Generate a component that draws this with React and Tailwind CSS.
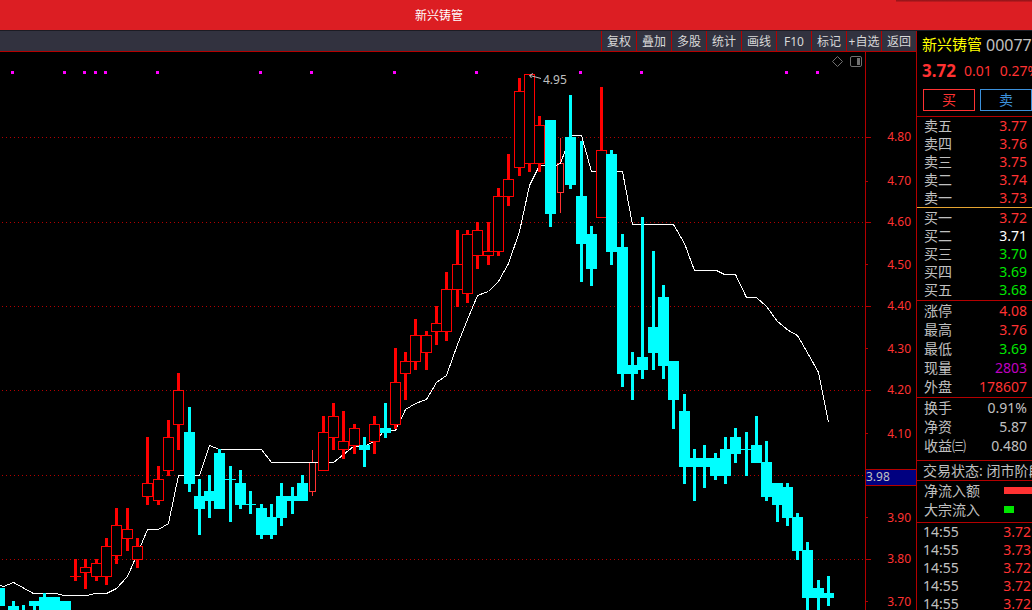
const FONT = "font-['Noto_Sans','Noto_Sans_CJK_SC',sans-serif]";

const TOOLS = ["复权", "叠加", "多股", "统计", "画线", "F10", "标记", "+自选", "返回"];

const CANDLES = [
  ["d", -2, 588, 606, 588, 606],
  ["d", 12, 606, 612, 601, 612],
  ["d", 22, 610, 612, 605, 612],
  ["d", 33, 601, 606, 601, 612],
  ["d", 43, 597, 612, 593, 612],
  ["d", 53, 597, 612, 597, 612],
  ["d", 64, 601, 612, 601, 612],
  ["u", 74, 576, 577, 559, 581],
  ["u", 84, 567, 573, 559, 589],
  ["u", 95, 563, 577, 559, 581],
  ["u", 105, 546, 577, 538, 585],
  ["u", 115, 525, 556, 508, 564],
  ["u", 126, 529, 539, 508, 551],
  ["u", 136, 546, 560, 538, 568],
  ["u", 146, 483, 497, 437, 505],
  ["u", 157, 479, 501, 466, 505],
  ["u", 167, 437, 471, 420, 476],
  ["u", 177, 390, 425, 373, 450],
  ["d", 188, 432, 484, 407, 492],
  ["d", 198, 496, 509, 479, 535],
  ["d", 208, 491, 501, 475, 518],
  ["d", 218, 453, 509, 449, 509],
  ["d", 229, 479, 480, 466, 522],
  ["d", 239, 483, 505, 470, 509],
  ["d", 249, 504, 505, 491, 514],
  ["d", 260, 508, 535, 504, 539],
  ["d", 270, 517, 535, 504, 539],
  ["d", 280, 496, 518, 483, 526],
  ["d", 291, 496, 501, 487, 514],
  ["d", 301, 483, 501, 475, 501],
  ["t", 311, 462, 492, 450, 496],
  ["u", 322, 432, 471, 416, 471],
  ["u", 332, 416, 438, 403, 450],
  ["u", 342, 441, 450, 411, 459],
  ["u", 353, 428, 446, 424, 454],
  ["d", 363, 445, 450, 437, 467],
  ["u", 373, 424, 442, 416, 454],
  ["d", 384, 428, 433, 403, 438],
  ["u", 394, 382, 425, 348, 429],
  ["u", 404, 361, 374, 352, 400],
  ["u", 414, 335, 362, 319, 370],
  ["u", 425, 335, 353, 331, 370],
  ["u", 435, 323, 332, 306, 345],
  ["u", 445, 289, 332, 272, 341],
  ["u", 456, 264, 290, 230, 307],
  ["u", 466, 234, 294, 230, 303],
  ["u", 476, 230, 256, 222, 269],
  ["u", 487, 251, 256, 222, 265],
  ["u", 497, 196, 252, 188, 256],
  ["u", 507, 179, 197, 154, 206],
  ["u", 518, 91, 168, 78, 176],
  ["u", 528, 74, 164, 74, 172],
  ["u", 538, 125, 164, 116, 172],
  ["d", 549, 120, 214, 120, 227],
  ["t", 559, 163, 193, 138, 213],
  ["d", 569, 137, 185, 95, 189],
  ["d", 580, 196, 244, 141, 282],
  ["d", 590, 234, 269, 226, 286],
  ["u", 600, 150, 218, 87, 218],
  ["d", 610, 154, 252, 150, 265],
  ["d", 621, 247, 374, 234, 387],
  ["d", 631, 365, 374, 352, 400],
  ["d", 641, 357, 370, 217, 379],
  ["d", 652, 327, 353, 251, 370],
  ["d", 662, 297, 366, 285, 379],
  ["d", 672, 361, 400, 361, 429],
  ["d", 683, 411, 467, 394, 484],
  ["d", 693, 458, 467, 449, 501],
  ["d", 703, 458, 467, 445, 488],
  ["d", 714, 458, 476, 453, 480],
  ["d", 724, 449, 476, 437, 484],
  ["d", 734, 437, 454, 428, 463],
  ["d", 745, 449, 450, 432, 476],
  ["d", 755, 445, 463, 416, 463],
  ["d", 765, 462, 497, 441, 501],
  ["d", 776, 483, 505, 483, 522],
  ["d", 786, 487, 518, 483, 526],
  ["d", 796, 517, 551, 513, 560],
  ["d", 806, 550, 598, 542, 612],
  ["d", 817, 588, 598, 580, 612],
  ["d", 827, 593, 598, 576, 606],
];

const AVERAGE = [
  [0, 585], [3, 586], [13, 582], [33, 593], [55, 593], [64, 595], [86, 595], [95, 593],
  [106, 593], [116, 588], [127, 576], [137, 553], [147, 529], [158, 529], [168, 523],
  [178, 475], [199, 475], [209, 445], [219, 449], [261, 449], [271, 462], [333, 462],
  [353, 446], [363, 446], [374, 441], [384, 430], [395, 430], [405, 409], [415, 403],
  [426, 399], [436, 382], [446, 375], [457, 344], [467, 319], [477, 295], [488, 291],
  [498, 281], [508, 263], [519, 231], [529, 185], [539, 165], [555, 165], [560, 163],
  [570, 135], [581, 135], [591, 171], [622, 171], [632, 224], [673, 224], [684, 243],
  [694, 270], [716, 270], [724, 274], [735, 274], [746, 297], [756, 297], [766, 306],
  [777, 321], [788, 330], [797, 335], [808, 354], [818, 372], [828, 422],
];

const MARKS = [11, 63, 83, 94, 104, 156, 259, 310, 393, 475, 579, 640, 785, 816];
const GRID = [137, 222, 306, 390, 475, 559];
const MINOR = [181, 264, 348, 433, 517, 601];
const SCALE = [
  ["4.80", 141], ["4.70", 185], ["4.60", 226], ["4.50", 269], ["4.40", 310], ["4.30", 353],
  ["4.20", 394], ["4.10", 438], ["3.90", 522], ["3.80", 563], ["3.70", 606],
];

const RED = "text-[#ff3232]";
const GREEN = "text-[#00e600]";
const GREY = "text-[#c0c0c0]";

const SELLS = [["卖五", "3.77", RED], ["卖四", "3.76", RED], ["卖三", "3.75", RED], ["卖二", "3.74", RED], ["卖一", "3.73", RED]];
const BUYS = [["买一", "3.72", RED], ["买二", "3.71", "text-white"], ["买三", "3.70", GREEN], ["买四", "3.69", GREEN], ["买五", "3.68", GREEN]];
const LIMITS = [["涨停", "4.08", RED], ["最高", "3.76", RED], ["最低", "3.69", GREEN], ["现量", "2803", "text-[#c000c0]"], ["外盘", "178607", RED]];
const RATIOS = [["换手", "0.91%", GREY], ["净资", "5.87", GREY], ["收益㈢", "0.480", GREY]];
const TRADES = [["14:55", "3.72", RED], ["14:55", "3.73", RED], ["14:55", "3.72", RED], ["14:55", "3.72", RED], ["14:55", "3.72", RED]];

function Candle({ data }) {
  const [kind, x, top, bottom, high, low] = data;
  if (kind === "d") {
    return (
      <g fill="#00ffff">
        <rect x={x} y={high} width="3" height={low - high} />
        <rect x={x - 4} y={top} width="11" height={bottom - top} />
      </g>
    );
  }
  if (kind === "t") {
    return (
      <g fill="#ff3232">
        <rect x={x + 1} y={high} width="1" height={low - high} />
        <rect x={x - 2} y={top} width="7" height={bottom - top} />
        <rect x={x - 1} y={top + 1} width="5" height={bottom - top - 2} fill="#000" />
      </g>
    );
  }
  return (
    <g fill="#ff0000">
      <rect x={x} y={high} width="3" height={low - high} />
      <rect x={x - 4} y={top} width="11" height={bottom - top} />
      {bottom - top > 2 && <rect x={x - 3} y={top + 1} width="9" height={bottom - top - 2} fill="#000" />}
    </g>
  );
}

function Chart() {
  const thin = CANDLES.filter((c) => c[0] === "t");
  const solid = CANDLES.filter((c) => c[0] !== "t");
  return (
    <svg viewBox="0 52 916 558" className="block h-auto w-full" shapeRendering="crispEdges" role="img" aria-label="新兴铸管 K线图">
      {GRID.map((y) => (
        <line key={y} x1="2" x2="865" y1={y + 0.5} y2={y + 0.5} stroke="#b40000" strokeDasharray="1 3" />
      ))}
      {MARKS.map((x) => (
        <rect key={x} x={x} y="71" width="3" height="3" fill="#ff00ff" />
      ))}
      {thin.map((c) => <Candle key={c[1]} data={c} />)}
      <polyline points={AVERAGE.map(([x, y]) => `${x + 0.5},${y + 0.5}`).join(" ")} fill="none" stroke="#fff" />
      {solid.map((c) => <Candle key={c[1]} data={c} />)}

      <g stroke="#c0c0c0" fill="none" shapeRendering="auto">
        <path d="M541 78.5L530 75.5M531.5 78L529.5 75.5L533 73.5" />
      </g>
      <text x="543" y="84" fontSize="12" fill="#c0c0c0">4.95</text>

      <g stroke="#707070" fill="none" shapeRendering="auto">
        <path d="M837.5 56.5L842.5 61.5L837.5 66.5L832.5 61.5Z" />
        <rect x="850.5" y="56.5" width="11" height="10" rx="1.5" />
        <rect x="857" y="58" width="3" height="7" fill="#707070" stroke="none" />
      </g>

      <g fill="#b40000">
        <rect x="865" y="52" width="1" height="558" />
        {GRID.map((y) => <rect key={y} x="866" y={y} width="5" height="1" />)}
        {MINOR.map((y) => <rect key={y} x="866" y={y} width="2" height="1" />)}
        <rect x="865" y="469" width="51" height="17" />
      </g>
      <rect x="866" y="470" width="50" height="15" fill="#000080" />
      <text x="866" y="481" fontSize="12" fill="#c0c0c0">3.98</text>
      {SCALE.map(([label, y]) => (
        <text key={label} x="911" y={y} fontSize="12" fill="#ff3232" textAnchor="end">{label}</text>
      ))}
    </svg>
  );
}

function Quotes({ rows, label, rowClass, nameClass, valueClass }) {
  return (
    <table className="w-full border-collapse" aria-label={label}>
      <tbody>
        {rows.map(([name, value, color], i) => (
          <tr key={i} className={rowClass}>
            <th scope="row" className={`p-0 text-left font-normal whitespace-nowrap text-[#c0c0c0] ${nameClass}`}>{name}</th>
            <td className={`p-0 text-right ${valueClass} ${color}`}>{value}</td>
          </tr>
        ))}
      </tbody>
    </table>
  );
}

export default function App() {
  return (
    <div className={`flex h-screen flex-col overflow-hidden bg-black ${FONT}`}>
      <header className="relative h-[31px] shrink-0 border-b border-[#1c1c24] bg-[#dc1e23] pl-[415px]">
        <h1 className="text-xs leading-[31px] text-white">新兴铸管</h1>
        <div className="absolute top-0 right-0 h-[2px] w-[136px] bg-linear-to-b from-[#8c1418] to-[#c81b20]" />
      </header>

      <div className="flex min-h-0 flex-1">
        <main className="min-w-0 flex-1">
          <nav className="flex h-[21px] justify-end border-b border-[#b40000] bg-[#32323f]">
            {TOOLS.map((t) => (
              <button key={t} type="button" className="w-[35px] overflow-hidden border-l border-[#b40000] pt-px text-xs leading-5 whitespace-nowrap text-[#d8d8d8]">
                {t}
              </button>
            ))}
          </nav>
          <Chart />
        </main>

        <aside className="w-[116px] shrink-0 overflow-hidden border-l border-[#b40000] text-sm whitespace-nowrap">
          <section className="border-b border-[#b40000] pb-[5px]">
            <h2 className="flex h-7 items-center gap-1 pl-[5px]">
              <span className="text-[15px] text-[#ffff00]">新兴铸管</span>
              <span className="text-base text-[#c0c0c0]">000778</span>
            </h2>
            <p className="flex h-6 items-center gap-2 pl-[5px] text-[#ff3232]">
              <strong className="text-[17px]">3.72</strong>
              <span>0.01</span>
              <span>0.27%</span>
            </p>
            <div className="flex gap-[5px] pt-[6px] pl-[6px]">
              <button type="button" className="h-[22px] w-[52px] shrink-0 border border-[#ff3232] leading-5 text-[#ff3232]">买</button>
              <button type="button" className="h-[22px] w-[52px] shrink-0 border border-[#3c91dc] leading-5 text-[#3c91dc]">卖</button>
            </div>
          </section>

          <section className="border-b border-[#e6a532]">
            <Quotes rows={SELLS} label="卖盘" rowClass="h-[18px] leading-[18px]" nameClass="pl-[7px]" valueClass="pr-[5px]" />
          </section>
          <section className="border-b border-[#b40000] py-px">
            <Quotes rows={BUYS} label="买盘" rowClass="h-[18px] leading-[18px]" nameClass="pl-[7px]" valueClass="pr-[5px]" />
          </section>
          <section className="border-b border-[#b40000] pb-px">
            <Quotes rows={LIMITS} label="行情" rowClass="h-[19px] leading-[19px]" nameClass="pl-[7px]" valueClass="pr-[5px]" />
          </section>
          <section className="border-b border-[#b40000] pb-[5px]">
            <Quotes rows={RATIOS} label="指标" rowClass="h-[19px] leading-[19px]" nameClass="pl-[7px]" valueClass="pr-[5px]" />
          </section>
          <p className="h-5 border-b border-[#b40000] pl-[6px] leading-[19px] text-[#c0c0c0]">交易状态: 闭市阶段</p>
          <section className="border-b border-[#b40000] pb-[3px] pl-[7px] leading-[19px] text-[#c0c0c0]">
            <div className="flex items-center justify-between">
              净流入额
              <span className="h-[7px] w-7 bg-[#ff3232]" />
            </div>
            <div className="flex items-center justify-between">
              大宗流入
              <span className="flex w-7"><span className="h-[7px] w-[10px] bg-[#00e600]" /></span>
            </div>
          </section>
          <Quotes rows={TRADES} label="成交明细" rowClass="h-[18px] leading-[18px]" nameClass="pl-[6px]" valueClass="pr-px" />
        </aside>
      </div>
    </div>
  );
}
